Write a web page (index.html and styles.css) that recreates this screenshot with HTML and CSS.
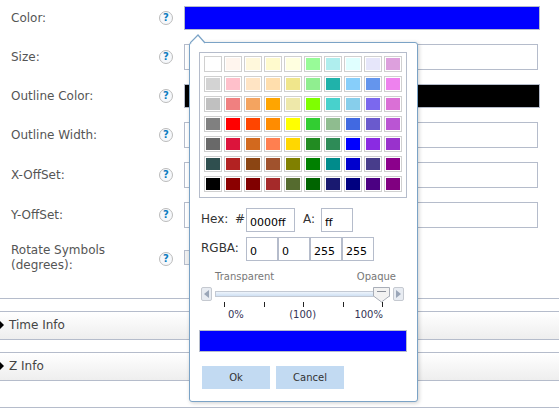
FILE: index.html

```html
<!DOCTYPE html>
<html lang="en">
<head>
  <meta charset="UTF-8" />
  <title>Symbol Style</title>
  <link rel="stylesheet" href="styles.css">
</head>
<body>
  <div class="page">
    <div class="form">
      <div class="row">
        <label class="row-label">Color:</label>
        <span class="help">?</span>
        <div class="color-bar blue"></div>
      </div>
      <div class="row">
        <label class="row-label">Size:</label>
        <span class="help">?</span>
        <input class="text-input" type="text" />
      </div>
      <div class="row">
        <label class="row-label">Outline Color:</label>
        <span class="help">?</span>
        <div class="color-bar black"></div>
      </div>
      <div class="row">
        <label class="row-label">Outline Width:</label>
        <span class="help">?</span>
        <input class="text-input" type="text" />
      </div>
      <div class="row">
        <label class="row-label">X-OffSet:</label>
        <span class="help">?</span>
        <input class="text-input" type="text" />
      </div>
      <div class="row">
        <label class="row-label">Y-OffSet:</label>
        <span class="help">?</span>
        <input class="text-input" type="text" />
      </div>
      <div class="row row-tall">
        <label class="row-label">Rotate Symbols<br>(degrees):</label>
        <span class="help">?</span>
        <input class="small-input" type="text" />
      </div>
    </div>

    <div class="section"><span class="caret"></span>Time Info</div>
    <div class="section"><span class="caret"></span>Z Info</div>
    <div class="page-end"></div>

    <div class="picker">
      <svg class="picker-arrow" width="18" height="10" viewBox="0 0 18 10">
        <polyline points="0,9 8,1 15,9" fill="#fff" stroke="#7ba3c6" stroke-width="1.2" />
      </svg>

      <div class="palette" id="palette"></div>

      <div class="value-row hex-row">
        <span class="value-label hex-label">Hex:</span>
        <span class="value-label hash">#</span>
        <input class="value-input hex-input" type="text" value="0000ff" />
        <span class="value-label alpha-label">A:</span>
        <input class="value-input alpha-input" type="text" value="ff" />
      </div>
      <div class="value-row rgba-row">
        <span class="value-label rgba-label">RGBA:</span>
        <input class="value-input" type="text" value="0" />
        <input class="value-input" type="text" value="0" />
        <input class="value-input" type="text" value="255" />
        <input class="value-input" type="text" value="255" />
      </div>

      <div class="slider">
        <div class="slider-ends"><span>Transparent</span><span>Opaque</span></div>
        <div class="slider-bar">
          <span class="slider-btn"><span class="tri-left"></span></span>
          <div class="slider-track">
            <svg class="slider-thumb" width="17" height="16" viewBox="0 0 17 16">
              <polygon points="0.5,0.5 16.5,0.5 16.5,9 8.5,15 0.5,9" fill="#f2f2f2" stroke="#a9aeb8" />
              <line x1="4" y1="4.5" x2="13" y2="4.5" stroke="#8a8f99" />
            </svg>
          </div>
          <span class="slider-btn"><span class="tri-right"></span></span>
        </div>
        <div class="ticks"><i></i><i></i><i></i><i></i><i></i></div>
        <div class="tick-labels"><span>0%</span><span class="mid-label">(100)</span><span>100%</span></div>
      </div>

      <div class="preview"></div>

      <div class="actions">
        <button class="action-btn">Ok</button>
        <button class="action-btn">Cancel</button>
      </div>
    </div>
  </div>

  <script src="palette.js"></script>
</body>
</html>
```

FILE: styles.css

```css
* {
  box-sizing: border-box;
}
body {
  font-family: "DejaVu Sans", Verdana, sans-serif;
  font-size: 12px;
  color: #444;
  background-color: #fff;
  margin: 0;
}
.page {
  position: relative;
  width: 559px;
  height: 412px;
  overflow: hidden;
}

/* form rows */
.form {
  display: flex;
  flex-direction: column;
  gap: 14px;
  padding: 6px 0 26px;
  border-bottom: 1px solid #b5bccb;
  height: 299px;
}
.row {
  display: flex;
  align-items: center;
  padding-left: 11px;
}
.row-tall {
  height: 30px;
}
.row-label {
  width: 148px;
  line-height: 15px;
  color: #555;
}
.row-tall .row-label {
  padding-top: 1px;
}
.help {
  flex: none;
  width: 14px;
  height: 14px;
  margin-right: 11px;
  margin-top: -1px;
  border: 1px solid #bbb;
  border-radius: 50%;
  background: #f6f8fb;
  color: #0c7cbf;
  font-size: 10px;
  font-weight: bold;
  line-height: 12px;
  text-align: center;
}
.row-tall .help {
  margin-top: 3px;
}
.color-bar {
  width: 355.5px;
  height: 24px;
  border: 1px solid #b5bccb;
}
.blue {
  background: #00f;
}
.black {
  background: #000;
}
.text-input {
  width: 354px;
  height: 26px;
  border: 1px solid #b5bccb;
  background: #fff;
}
.small-input {
  width: 60px;
  height: 15px;
  border: 1px solid #b5bccb;
  background: #f0f0f0;
}

/* collapsed sections */
.section {
  display: flex;
  align-items: center;
  height: 29px;
  margin-top: 12px;
  padding-bottom: 1px;
  border-top: 1px solid #b5bccb;
  border-bottom: 1px solid #b5bccb;
  background: linear-gradient(#fff, #eee);
  color: #444;
}
.caret {
  width: 0;
  height: 0;
  margin-right: 5px;
  border-top: 4px solid transparent;
  border-bottom: 4px solid transparent;
  border-left: 4px solid #000;
}
.page-end {
  height: 27px;
  border-bottom: 1px solid #b5bccb;
}

/* colour picker popup */
.picker {
  position: absolute;
  left: 189px;
  top: 42px;
  width: 229px;
  height: 360px;
  padding: 9px 10px 0 9px;
  background: #fff;
  border: 1px solid #7ba3c6;
  border-radius: 3px;
  box-shadow: 1px 1px 4px rgba(0, 0, 0, 0.2);
}
.picker-arrow {
  position: absolute;
  left: 0;
  top: -9px;
}
.palette {
  display: grid;
  grid-template-columns: repeat(10, 18px);
  grid-auto-rows: 16px;
  gap: 4px 2px;
  width: 208px;
  height: 146px;
  padding: 3px 4px 0;
  border: 1px solid #b5bccb;
}
.swatch {
  border: 1px solid #d0d0d0;
  background-clip: content-box;
  padding: 1px;
}

.value-row {
  display: flex;
  align-items: center;
  color: #333;
  font-size: 12px;
}
.hex-row {
  margin-top: 10px;
  margin-left: 2px;
}
.rgba-row {
  margin-top: 5px;
  margin-left: 2px;
}
.value-label {
  line-height: 20px;
  margin-top: -2px;
}
.hex-label {
  width: 34px;
}
.hash {
  width: 11px;
}
.alpha-label {
  width: 18px;
  margin-left: 8px;
}
.rgba-label {
  width: 45px;
}
.value-input {
  width: 32px;
  height: 24px;
  padding: 4px 0 0 3px;
  border: 1px solid #b5bccb;
  font-family: inherit;
  font-size: 11px;
  color: #000;
}
.hex-input {
  width: 49px;
}

/* slider */
.slider {
  margin-top: 8px;
}
.slider-ends {
  display: flex;
  justify-content: space-between;
  padding: 1px 11px 0 16px;
  color: #777;
  font-size: 10px;
  line-height: 13px;
}
.slider-bar {
  display: flex;
  align-items: center;
  gap: 3px;
  margin: 4px 0 0 2px;
}
.slider-btn {
  display: flex;
  align-items: center;
  justify-content: center;
  width: 11px;
  height: 14px;
  border: 1px solid #c5c9d0;
  border-radius: 2px;
  background: #e8ecf2;
}
.tri-left,
.tri-right {
  width: 0;
  height: 0;
  border-top: 4px solid transparent;
  border-bottom: 4px solid transparent;
}
.tri-left {
  border-right: 5px solid #9aa6b8;
}
.tri-right {
  border-left: 5px solid #9aa6b8;
}
.slider-track {
  position: relative;
  width: 175px;
  height: 6px;
  border: 1px solid #c3c9d3;
  background: linear-gradient(#eef4fb, #cfe0f3);
}
.slider-thumb {
  position: absolute;
  right: -1px;
  top: -5px;
}
.ticks {
  display: flex;
  justify-content: space-between;
  width: 159px;
  margin: 1px 0 0 25px;
  height: 5px;
}
.ticks i {
  width: 1px;
  background: #222;
}
.tick-labels {
  display: flex;
  justify-content: space-between;
  width: 155px;
  margin: 1px 0 0 29px;
  color: #335;
  font-size: 10px;
  line-height: 13px;
}
.mid-label {
  margin-left: 7px;
}

.preview {
  height: 22px;
  margin-top: 9px;
  background: #00f;
  border: 1px solid #b5bccb;
}
.actions {
  display: flex;
  gap: 6px;
  margin: 14px 0 0 3px;
}
.action-btn {
  width: 68px;
  height: 23px;
  padding: 0;
  border: none;
  background: #c2daf2;
  color: #333;
  font-family: inherit;
  font-size: 10px;
}
```

FILE: palette.js

```js
const colors = [
  "#ffffff", "seashell", "cornsilk", "lemonchiffon", "lightyellow", "palegreen", "paleturquoise", "lightcyan", "lavender", "plum",
  "lightgray", "pink", "bisque", "navajowhite", "khaki", "lightgreen", "lightseagreen", "lightskyblue", "cornflowerblue", "violet",
  "silver", "lightcoral", "sandybrown", "orange", "palegoldenrod", "chartreuse", "mediumturquoise", "skyblue", "mediumslateblue", "orchid",
  "gray", "red", "orangered", "darkorange", "yellow", "limegreen", "darkseagreen", "royalblue", "slateblue", "mediumorchid",
  "dimgray", "crimson", "chocolate", "coral", "gold", "forestgreen", "seagreen", "blue", "blueviolet", "darkorchid",
  "darkslategray", "firebrick", "saddlebrown", "sienna", "olive", "green", "darkcyan", "mediumblue", "darkslateblue", "darkmagenta",
  "black", "darkred", "maroon", "brown", "darkolivegreen", "darkgreen", "midnightblue", "navy", "indigo", "purple"
];

const palette = document.getElementById("palette");
colors.forEach(function (c) {
  const swatch = document.createElement("span");
  swatch.className = "swatch";
  swatch.style.backgroundColor = c;
  palette.appendChild(swatch);
});
```
